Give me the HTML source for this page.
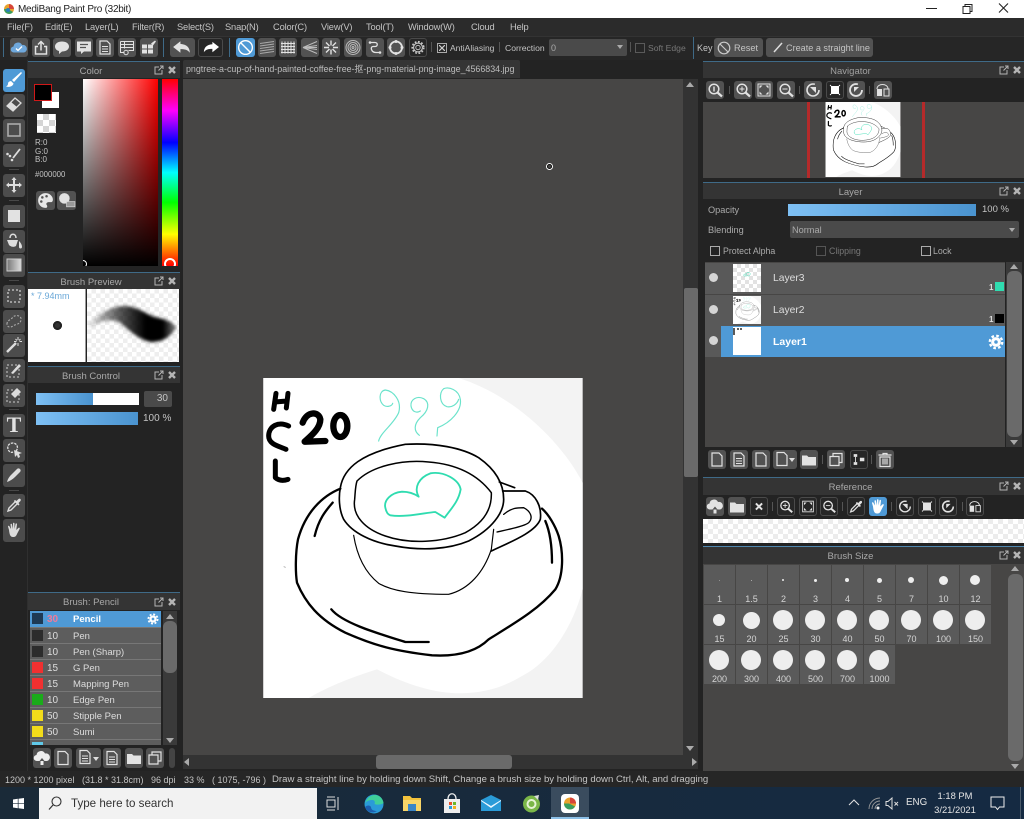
<!DOCTYPE html>
<html><head><meta charset="utf-8"><title>MediBang Paint Pro</title>
<style>
html,body{margin:0;padding:0}
body{width:1024px;height:819px;overflow:hidden;position:relative;background:#232323;font-family:"Liberation Sans","Noto Sans CJK SC",sans-serif;font-size:10px;color:#c4c4c4;filter:blur(.35px)}
div,span,svg{position:absolute;box-sizing:border-box}
.t{white-space:nowrap;line-height:12px}
.m1{font-size:9.300px;letter-spacing:-.15px;top:21px}
.h{left:0;width:100%;height:17px;background:#343434;border-top:1px solid #3f6a87;color:#a9a9a9;font-size:9.500px;line-height:19px;text-align:center;padding-right:26px}
.b{width:18px;height:18px;background:#525252;border-radius:3px;color:#e2e2e2}
.b svg{left:0;top:0;width:100%;height:100%}
.d{background:#262626;border:1px solid #4a4a4a}
.on{background:#4f9ad6;color:#fff}
.tl{left:3px;width:22px;height:23px;background:#4c4c4c;border-radius:3px;color:#ddd}
.tl.on{background:#4f9ad6;color:#fff}
.tl svg{left:2px;top:2px;width:18px;height:18px}
.sep{width:1px;background:#555}
.tsep{left:9px;width:10px;height:1px;background:#484848}
.ck{width:10px;height:10px;border:1px solid #aaa}
.cell{width:31px;height:39px;background:#5a5a5a}
.cell span{left:0;width:100%;text-align:center;font-size:9px;line-height:10px;bottom:0;color:#d5d5d5}
.cell i{position:absolute;background:#eee;border-radius:50%;display:block}
.row{left:30px;width:131px;height:15px;background:#5d5d5d}
.row .s{left:2px;top:2px;width:11px;height:11px;background:#2c2c2c}
.row .n{left:17px;top:3px;font-size:10px;color:#ddd;white-space:nowrap;line-height:12px}
.row .m{left:43px;top:3px;font-size:9.500px;color:#ddd;white-space:nowrap;line-height:12px}
.lr{left:705px;width:300px;height:31px;background:#595959}
.eye{left:4px;top:10px;width:9px;height:9px;border-radius:50%;background:#d5d5d5}
.th{left:28px;top:1px;width:28px;height:28px;background:#fff}
.chk{background:conic-gradient(#e2e2e2 25%,#fff 0 50%,#e2e2e2 0 75%,#fff 0) 0 0/8px 8px}
.fl{width:10px;height:10px;color:#b5b5b5}
.sb{background:#3a3a3a}
.th2{background:#6a6a6a;border-radius:6px}
.up{width:0;height:0;border-left:4px solid transparent;border-right:4px solid transparent;border-bottom:5px solid #aaa}
.dn{width:0;height:0;border-left:4px solid transparent;border-right:4px solid transparent;border-top:5px solid #aaa}
</style></head><body>
<svg width="0" height="0" style="left:0;top:0">
<defs>
<symbol id="fl" viewBox="0 0 10 10"><path d="M5 2H1v7h7V5M4.500 5.500L9 1M6 1h3v3" fill="none" stroke="currentColor" stroke-width="1"/></symbol>
<symbol id="cl" viewBox="0 0 10 10"><path d="M2 2l6 6M8 2l-6 6" fill="none" stroke="currentColor" stroke-width="2.400"/></symbol>
<symbol id="cloud" viewBox="0 0 18 18"><path d="M4 14a3 3 0 0 1-.5-6A4.500 4.500 0 0 1 12 6.500 3.800 3.800 0 0 1 14 14z" fill="currentColor"/><path d="M6 10l2 2 4-4" fill="none" stroke="#fff" stroke-width="1.300"/></symbol>
<symbol id="cloudup" viewBox="0 0 18 18"><path d="M4 12a3 3 0 0 1-.5-6A4.500 4.500 0 0 1 12 4.500 3.800 3.800 0 0 1 14 12h-2.500L9 9l-2.500 3z" fill="currentColor"/><path d="M7.500 12h3v4h-3z" fill="currentColor"/></symbol>
<symbol id="share" viewBox="0 0 18 18"><path d="M6 8H3.500v7.500h11V8H12M9 12V3M6 6l3-3 3 3" fill="none" stroke="currentColor" stroke-width="1.500"/></symbol>
<symbol id="chat" viewBox="0 0 18 18"><path d="M9 3c4 0 7 2 7 5s-3 5-7 5l-3 2.500V12.500C3.500 12 2 10 2 8c0-3 3-5 7-5z" fill="currentColor"/></symbol>
<symbol id="comment" viewBox="0 0 18 18"><path d="M2 3h14v10H9l-3 2.500V13H2z" fill="currentColor"/><path d="M5 6h8M5 9h6" stroke="#555" stroke-width="1.300"/></symbol>
<symbol id="doc" viewBox="0 0 18 18"><path d="M4 2.500h7l3 3v10H4z" fill="none" stroke="currentColor" stroke-width="1.200"/></symbol>
<symbol id="docl" viewBox="0 0 18 18"><path d="M4 2.500h7l3 3v10H4z" fill="none" stroke="currentColor" stroke-width="1.200"/><path d="M6 8h6M6 10.500h6M6 13h6" stroke="currentColor"/></symbol>
<symbol id="table" viewBox="0 0 18 18"><path d="M2.500 3h13v9h-5M2.500 3v11h4M2.500 6h13M2.500 9h13M6.500 3v7" fill="none" stroke="currentColor"/><circle cx="8" cy="14" r="2.200" fill="none" stroke="currentColor"/></symbol>
<symbol id="gridb" viewBox="0 0 18 18"><path d="M2 6h5v4H2zM8 6h5v4H8zM2 11h5v4H2zM8 11h5v4H8z" fill="currentColor"/><path d="M11 5l4-3 1 1-3 4z" fill="currentColor"/></symbol>
<symbol id="undo" viewBox="0 0 24 18"><path d="M10 3L3 8.500l7 5.500v-3.500c4 0 7 .5 9 3.500 0-5-3-8-9-8.500z" fill="currentColor"/></symbol>
<symbol id="redo" viewBox="0 0 24 18"><path d="M14 3l7 5.500-7 5.500v-3.500c-4 0-7 .5-9 3.500 0-5 3-8 9-8.500z" fill="currentColor"/></symbol>
<symbol id="nosnap" viewBox="0 0 18 18"><circle cx="9" cy="9" r="6.500" fill="none" stroke="currentColor" stroke-width="1.300"/><path d="M4.500 4.500l9 9" stroke="currentColor" stroke-width="1.300"/></symbol>
<symbol id="para" viewBox="0 0 18 18"><path d="M2 5l14-2M2 7.500l14-2M2 10l14-2M2 12.500l14-2M2 15l14-2" stroke="currentColor" stroke-width="1"/></symbol>
<symbol id="gridp" viewBox="0 0 18 18"><path d="M3 3v12M6 3v12M9 3v12M12 3v12M15 3v12M2 5h14M2 8h14M2 11h14M2 14h14" stroke="currentColor" stroke-width="1"/></symbol>
<symbol id="persp" viewBox="0 0 18 18"><path d="M2 9l14-6M2 9l14-2M2 9h14M2 9l14 2M2 9l14 6" stroke="currentColor" stroke-width="1"/></symbol>
<symbol id="radial" viewBox="0 0 18 18"><path d="M9 2v5M9 11v5M2 9h5M11 9h5M4 4l3.500 3.500M14 4l-3.500 3.500M4 14l3.500-3.500M14 14l-3.500-3.500" stroke="currentColor" stroke-width="1.400"/></symbol>
<symbol id="conc" viewBox="0 0 18 18"><g fill="none" stroke="currentColor"><circle cx="9" cy="9" r="7"/><circle cx="9" cy="9" r="5"/><circle cx="9" cy="9" r="3"/><circle cx="9" cy="9" r="1"/></g></symbol>
<symbol id="curve" viewBox="0 0 18 18"><path d="M4 4h5c3 0 3 4 0 4H7c-3 0-2 6 3 6h4" fill="none" stroke="currentColor" stroke-width="1.300"/><circle cx="4" cy="4" r="1.300" fill="currentColor"/><circle cx="14" cy="14" r="1.300" fill="currentColor"/></symbol>
<symbol id="circ" viewBox="0 0 18 18"><circle cx="9" cy="9" r="6" fill="none" stroke="currentColor" stroke-width="1.800"/><g fill="currentColor"><circle cx="9" cy="3" r="1.500"/><circle cx="9" cy="15" r="1.500"/><circle cx="3" cy="9" r="1.500"/><circle cx="15" cy="9" r="1.500"/></g></symbol>
<symbol id="gear" viewBox="0 0 18 18"><circle cx="9" cy="9" r="5" fill="none" stroke="currentColor" stroke-width="1.200"/><circle cx="9" cy="9" r="2.500" fill="none" stroke="currentColor"/><circle cx="9" cy="9" r="6.500" fill="none" stroke="currentColor" stroke-width="1.800" stroke-dasharray="2 1.800"/></symbol>
<symbol id="gearf" viewBox="0 0 18 18"><circle cx="9" cy="9" r="5.500" fill="currentColor"/><circle cx="9" cy="9" r="7" fill="none" stroke="currentColor" stroke-width="2.600" stroke-dasharray="3 2.500"/><circle cx="9" cy="9" r="2" fill="#4f9ad6"/></symbol>
<symbol id="mag" viewBox="0 0 18 18"><circle cx="8" cy="8" r="4.800" fill="none" stroke="currentColor" stroke-width="1.500"/><path d="M11.500 11.500L16 15.500" stroke="currentColor" stroke-width="2.200"/></symbol>
<symbol id="magp" viewBox="0 0 18 18"><circle cx="8" cy="8" r="4.800" fill="none" stroke="currentColor" stroke-width="1.500"/><path d="M11.500 11.500L16 15.500" stroke="currentColor" stroke-width="2.200"/><path d="M5.500 8h5M8 5.500v5" stroke="currentColor"/></symbol>
<symbol id="magm" viewBox="0 0 18 18"><circle cx="8" cy="8" r="4.800" fill="none" stroke="currentColor" stroke-width="1.500"/><path d="M11.500 11.500L16 15.500" stroke="currentColor" stroke-width="2.200"/><path d="M5.500 8h5" stroke="currentColor"/></symbol>
<symbol id="mag1" viewBox="0 0 18 18"><circle cx="8" cy="8" r="4.800" fill="none" stroke="currentColor" stroke-width="1.500"/><path d="M11.500 11.500L16 15.500" stroke="currentColor" stroke-width="2.200"/><path d="M8 5.500v5" stroke="currentColor" stroke-width="1.400"/></symbol>
<symbol id="fit" viewBox="0 0 18 18"><rect x="3" y="3" width="12" height="12" fill="none" stroke="currentColor"/><path d="M4.500 4.500h3l-3 3zM13.500 4.500v3l-3-3zM4.500 13.500v-3l3 3zM13.500 13.500h-3l3-3z" fill="currentColor"/></symbol>
<symbol id="fill" viewBox="0 0 18 18"><path d="M4 3l1 1.500h8L14 3l1 1-1.500 1v8L15 14l-1 1-1-1.500H5L4 15l-1-1 1.500-1V5L3 4z" fill="currentColor"/></symbol>
<symbol id="rotl" viewBox="0 0 18 18"><circle cx="9" cy="9" r="6" fill="none" stroke="currentColor" stroke-width="1.600" stroke-dasharray="30 8"/><path d="M6 6h6v6z" fill="currentColor"/></symbol>
<symbol id="rotr" viewBox="0 0 18 18"><circle cx="9" cy="9" r="6" fill="none" stroke="currentColor" stroke-width="1.800" stroke-dasharray="30 8"/><path d="M12 6H7v5z" fill="currentColor"/></symbol>
<symbol id="flip" viewBox="0 0 18 18"><path d="M3 8h5v7H3z" fill="currentColor"/><path d="M10 8h5v7h-5zM3 8c0-6 11-6 11 0" fill="none" stroke="currentColor"/></symbol>
<symbol id="folder" viewBox="0 0 18 18"><path d="M2 5h5l1.500 1.500H16V15H2z" fill="currentColor"/></symbol>
<symbol id="x" viewBox="0 0 18 18"><path d="M5.500 5.500l7 7M12.500 5.500l-7 7" stroke="currentColor" stroke-width="2.200"/></symbol>
<symbol id="copy" viewBox="0 0 18 18"><path d="M3 6h9v9H3zM6 6V3h9v9h-3" fill="none" stroke="currentColor" stroke-width="1.200"/></symbol>
<symbol id="merge" viewBox="0 0 18 18"><path d="M3 3h4v3H3zM3 12h4v3H3zM10 7h5v4h-5z" fill="currentColor"/><path d="M5 6v6" stroke="currentColor"/></symbol>
<symbol id="trash" viewBox="0 0 18 18"><path d="M2.500 4.500h13M7 4.500V3h4v1.500M4 6.500h10V16H4zM7 8v6M9 8v6M11 8v6" fill="none" stroke="currentColor" stroke-width="1.200"/></symbol>
<symbol id="hand" viewBox="0 0 18 18"><path d="M4 9L3 5.500c0-1 1.300-1 1.500 0L6 8 5.500 3.500c0-1 1.500-1 1.500 0L8 8V2.500c0-1 1.500-1 1.500 0V8l1-5c.2-1 1.500-.8 1.500.2L11.300 9l2-2c1-.8 1.800 0 1.300 1L12 13c-1 2.500-2 3-4 3-3 0-3.500-3-4-7z" fill="currentColor"/></symbol>
<symbol id="dropper" viewBox="0 0 18 18"><path d="M3 15l1-3 6.500-6.500 2 2L6 14z" fill="none" stroke="currentColor" stroke-width="1.400"/><path d="M10 4l1.500 1 2-2c1.500-1 3 .5 2 2l-2 2 1 1.500-1.200 1-4.500-4.500z" fill="currentColor"/></symbol>
</defs>
</svg>

<!-- title -->
<div style="left:0;top:0;width:1024px;height:18px;background:#fff"></div>
<svg style="left:3px;top:3px" width="12" height="12" viewBox="0 0 12 12"><circle cx="6" cy="6" r="5" fill="#e9a22c"/><path d="M6 1a5 5 0 0 1 5 5L6 6z" fill="#d8453a"/><path d="M1 6a5 5 0 0 0 5 5 5 5 0 0 0 4-2L5 6z" fill="#3a9e5e"/><circle cx="5" cy="7" r="2" fill="#2c7fb8"/></svg>
<span class="t" style="left:18px;top:4px;color:#222;font-size:10px;letter-spacing:-.27px">MediBang Paint Pro (32bit)</span>
<svg style="left:925px;top:2px" width="92" height="13" viewBox="0 0 92 13"><path d="M1 6.500h11" stroke="#222"/><path d="M38 4.500h7v7h-7zM40 4.500v-2h7v7h-2" fill="none" stroke="#222"/><path d="M74 1.500l9 9M83 1.500l-9 9" stroke="#222" stroke-width="1.100"/></svg>

<!-- menu -->
<div style="left:0;top:18px;width:1024px;height:18px;background:#2b2b2b"></div>
<span class="t m1" style="left:7px">File(F)</span>
<span class="t m1" style="left:45px">Edit(E)</span>
<span class="t m1" style="left:85px">Layer(L)</span>
<span class="t m1" style="left:132px">Filter(R)</span>
<span class="t m1" style="left:177px">Select(S)</span>
<span class="t m1" style="left:225px">Snap(N)</span>
<span class="t m1" style="left:273px">Color(C)</span>
<span class="t m1" style="left:321px">View(V)</span>
<span class="t m1" style="left:366px">Tool(T)</span>
<span class="t m1" style="left:408px">Window(W)</span>
<span class="t m1" style="left:471px">Cloud</span>
<span class="t m1" style="left:510px">Help</span>

<!-- toolbar -->
<div style="left:0;top:36px;width:1024px;height:24px;background:#262626;border-top:1px solid #333"></div>
<div class="sep" style="left:3px;top:38px;height:19px;background:#3f6a87"></div>
<div class="b" style="left:10px;top:38px;width:18px;height:19px;color:#6fa8dc"><svg><use href="#cloud"/></svg></div>
<div class="b" style="left:32px;top:38px;width:18px;height:19px"><svg><use href="#share"/></svg></div>
<div class="b" style="left:53px;top:38px;width:18px;height:19px"><svg><use href="#chat"/></svg></div>
<div class="b" style="left:75px;top:38px;width:18px;height:19px"><svg><use href="#comment"/></svg></div>
<div class="b" style="left:96px;top:38px;width:18px;height:19px"><svg><use href="#docl"/></svg></div>
<div class="b" style="left:118px;top:38px;width:18px;height:19px"><svg><use href="#table"/></svg></div>
<div class="b" style="left:140px;top:38px;width:18px;height:19px"><svg><use href="#gridb"/></svg></div>
<div class="sep" style="left:163px;top:38px;height:19px;background:#3f6a87"></div>
<div class="b" style="left:170px;top:38px;width:25px;height:19px"><svg><use href="#undo"/></svg></div>
<div class="b d" style="left:198px;top:38px;width:25px;height:19px;color:#fff"><svg><use href="#redo"/></svg></div>
<div class="sep" style="left:229px;top:38px;height:19px;background:#3f6a87"></div>
<div class="b on" style="left:236px;top:38px;width:19px;height:19px"><svg><use href="#nosnap"/></svg></div>
<div class="b" style="left:258px;top:38px;width:18px;height:19px;color:#aaa"><svg><use href="#para"/></svg></div>
<div class="b" style="left:279px;top:38px;width:18px;height:19px"><svg><use href="#gridp"/></svg></div>
<div class="b" style="left:301px;top:38px;width:18px;height:19px;color:#bbb"><svg><use href="#persp"/></svg></div>
<div class="b" style="left:322px;top:38px;width:18px;height:19px"><svg><use href="#radial"/></svg></div>
<div class="b" style="left:344px;top:38px;width:18px;height:19px;color:#bbb"><svg><use href="#conc"/></svg></div>
<div class="b" style="left:366px;top:38px;width:18px;height:19px"><svg><use href="#curve"/></svg></div>
<div class="b" style="left:387px;top:38px;width:18px;height:19px"><svg><use href="#circ"/></svg></div>
<div class="b d" style="left:409px;top:38px;width:18px;height:19px;color:#ccc"><svg><use href="#gear"/></svg></div>
<div class="sep" style="left:431px;top:42px;height:10px"></div>
<div class="ck" style="left:437px;top:43px"></div>
<svg style="left:439px;top:45px" width="6" height="6"><path d="M0 0l6 6M6 0L0 6" stroke="#ccc" stroke-width="1.200"/></svg>
<span class="t" style="left:450px;top:42px;font-size:8.500px">AntiAliasing</span>
<div class="sep" style="left:499px;top:42px;height:10px"></div>
<span class="t" style="left:505px;top:42px;font-size:8.600px">Correction</span>
<div style="left:549px;top:39px;width:78px;height:17px;background:#4a4a4a;border-radius:2px"></div>
<span class="t" style="left:551px;top:42px;font-size:9px;color:#aaa">0</span>
<div class="dn" style="left:617px;top:45px;border-left-width:3px;border-right-width:3px;border-top-width:4px"></div>
<div class="sep" style="left:630px;top:42px;height:10px"></div>
<div class="ck" style="left:635px;top:43px;border-color:#5a5a5a"></div>
<span class="t" style="left:648px;top:42px;font-size:8.600px;color:#777">Soft Edge</span>
<div class="sep" style="left:693px;top:37px;height:22px;background:#3f6a87"></div>
<span class="t" style="left:697px;top:42px;font-size:9px">Key</span>
<div class="b" style="left:714px;top:38px;width:49px;height:19px;color:#ccc"><svg style="width:16px;height:16px;left:2px;top:2px"><use href="#nosnap"/></svg></div>
<span class="t" style="left:734px;top:42px;font-size:9.200px">Reset</span>
<div class="b" style="left:766px;top:38px;width:107px;height:19px"></div>
<svg style="left:772px;top:41px" width="12" height="13"><path d="M2 11L10 2" stroke="#ddd" stroke-width="1.500"/></svg>
<span class="t" style="left:786px;top:42px;font-size:9.100px">Create a straight line</span>

<!-- tools -->
<div style="left:0;top:60px;width:28px;height:711px;background:#232323;border-right:1px solid #2f2f2f"></div>
<div class="tl on" style="top:69px"><svg viewBox="0 0 18 18"><path d="M16 1L7 9l2 2 8-9zM6 10c-2 .5-3 1-3 3 0 1-1 2-2 2.500 3 1 7 0 7.500-3z" fill="#fff"/></svg></div>
<div class="tl" style="top:94px"><svg viewBox="0 0 18 18"><path d="M2 10l8-8 6 5-8 8z" fill="none" stroke="currentColor" stroke-width="1.300"/><path d="M6 6l6 5-4 4-6-5z" fill="currentColor"/></svg></div>
<div class="tl" style="top:119px"><svg viewBox="0 0 18 18"><rect x="3" y="3" width="12" height="12" fill="none" stroke="#aaa" stroke-width="1.600"/></svg></div>
<div class="tl" style="top:144px"><svg viewBox="0 0 18 18"><path d="M8 12l7-9" stroke="currentColor" stroke-width="1.800"/><circle cx="2.500" cy="8" r="1.300" fill="currentColor"/><circle cx="5" cy="10" r="1.300" fill="currentColor"/><circle cx="7" cy="14" r="1.300" fill="currentColor"/></svg></div>
<div class="tsep" style="top:169px"></div>
<div class="tl" style="top:174px"><svg viewBox="0 0 18 18"><path d="M9 1l2.500 3H10v4h4V6.500L17 9l-3 2.500V10h-4v4h1.500L9 17l-2.500-3H8v-4H4v1.500L1 9l3-2.500V8h4V4H6.500z" fill="currentColor"/></svg></div>
<div class="tsep" style="top:200px"></div>
<div class="tl" style="top:205px"><svg viewBox="0 0 18 18"><rect x="3" y="3" width="12" height="12" fill="#e2e2e2"/></svg></div>
<div class="tl" style="top:230px"><svg viewBox="0 0 18 18"><path d="M5 6c0-5 6-5 6 0" fill="none" stroke="currentColor" stroke-width="1.500"/><path d="M2 8h11l-2 6c-3 2-6 0-7-1zM14 9c2 2 3 4 3 6s-3 2-3 0z" fill="currentColor"/></svg></div>
<div class="tl" style="top:254px"><svg viewBox="0 0 18 18"><defs><linearGradient id="g1"><stop offset="0" stop-color="#777"/><stop offset="1" stop-color="#ddd"/></linearGradient></defs><rect x="2" y="3" width="14" height="12" fill="url(#g1)" stroke="#ccc"/></svg></div>
<div class="tsep" style="top:280px"></div>
<div class="tl" style="top:285px"><svg viewBox="0 0 18 18"><rect x="3" y="3" width="12" height="12" fill="none" stroke="#ccc" stroke-width="1.300" stroke-dasharray="2 2"/></svg></div>
<div class="tl" style="top:310px"><svg viewBox="0 0 18 18"><path d="M2 12c0-4 4-4 6-7 3-3 9-1 8 3-1 5-6 4-8 6-3 2-6 1-6-2z" fill="none" stroke="#aaa" stroke-width="1.100" stroke-dasharray="2 1.500"/></svg></div>
<div class="tl" style="top:334px"><svg viewBox="0 0 18 18"><path d="M2 16l9-9" stroke="currentColor" stroke-width="2.400"/><path d="M13 1v3M13 7v3M9 5.500h2.500M14.500 5.500H17M10.500 3l1.500 1.500M15.500 3L14 4.500" stroke="currentColor"/></svg></div>
<div class="tl" style="top:359px"><svg viewBox="0 0 18 18"><rect x="2" y="4" width="12" height="12" fill="none" stroke="#ccc" stroke-dasharray="2 2"/><path d="M6 12l8-9 2 2-8 8z" fill="currentColor"/></svg></div>
<div class="tl" style="top:384px"><svg viewBox="0 0 18 18"><rect x="2" y="4" width="12" height="12" fill="none" stroke="#ccc" stroke-dasharray="2 2"/><path d="M6 8l6-6 4 4-6 6z" fill="currentColor"/></svg></div>
<div class="tsep" style="top:409px"></div>
<div class="tl" style="top:414px"></div>
<span style="left:3px;top:413px;width:22px;text-align:center;font-family:'Liberation Serif',serif;font-size:22px;line-height:24px;font-weight:bold;color:#e2e2e2">T</span>
<div class="tl" style="top:439px"><svg viewBox="0 0 18 18"><path d="M11 10c3-3 1-8-3-8S2 5 3 8c1 3 3 4 5 3" fill="none" stroke="currentColor" stroke-width="1.300" stroke-dasharray="2.500 1"/><path d="M9 9l8 3-3 1 1 3-2 1-1-3-2 2z" fill="currentColor"/></svg></div>
<div class="tl" style="top:464px"><svg viewBox="0 0 18 18"><path d="M2 16c1-4 3-6 5-8l5-5c2-2 5 1 3 3l-5 5c-2 2-5 4-8 5z" fill="currentColor"/></svg></div>
<div class="tsep" style="top:490px"></div>
<div class="tl" style="top:494px"><svg><use href="#dropper"/></svg></div>
<div class="tl" style="top:519px"><svg><use href="#hand"/></svg></div>

<!-- left panels -->
<div style="left:28px;top:61px;width:152px;height:710px;background:#232323"></div>

<!-- Color -->
<div style="left:28px;top:61px;width:152px;height:211px">
 <div class="h" style="top:0">Color</div>
 <svg class="fl" style="left:126px;top:4px"><use href="#fl"/></svg>
 <svg class="fl" style="left:139px;top:4px"><use href="#cl"/></svg>
 <div style="left:14px;top:31px;width:17px;height:16px;background:#fff"></div>
 <div style="left:6px;top:23px;width:18px;height:17px;background:#000;border:1px solid #d01818"></div>
 <div style="left:9px;top:53px;width:19px;height:19px;background:conic-gradient(#d5d5d5 25%,#fff 0 50%,#d5d5d5 0 75%,#fff 0) 0 0/12px 12px"></div>
 <span class="t" style="left:7px;top:78px;font-size:8px;line-height:8.700px">R:0<br>G:0<br>B:0</span>
 <span class="t" style="left:7px;top:109px;font-size:7.800px;line-height:10px">#000000</span>
 <div class="b" style="left:8px;top:130px;width:19px;height:19px"><svg viewBox="0 0 18 18"><path d="M9 2a7 7 0 1 0 0 14c2 0 2-2 1-3-.7-1.300.5-2.500 2-2.500h2c1.500 0 2-1 2-2.500C16 5 13 2 9 2z" fill="#e8e8e8"/><g fill="#555"><circle cx="6" cy="6" r="1.200"/><circle cx="10" cy="5" r="1.200"/><circle cx="5" cy="10" r="1.200"/></g></svg></div>
 <div class="b" style="left:29px;top:130px;width:19px;height:19px"><svg viewBox="0 0 18 18"><circle cx="7" cy="7" r="5" fill="#e2e2e2"/><rect x="9" y="10" width="8" height="5" fill="#999" stroke="#ddd" stroke-width=".6"/></svg></div>
 <div style="left:55px;top:18px;width:75px;height:187px;background:linear-gradient(to top,#000,transparent),linear-gradient(to right,#fff,#f00)"></div>
 <div style="left:134px;top:18px;width:16px;height:187px;background:linear-gradient(to bottom,#f00,#f0f 17%,#00f 34%,#0ff 50%,#0f0 66%,#ff0 83%,#f00);overflow:hidden">
  <div style="left:2px;top:179px;width:12px;height:12px;border:2px solid #fff;border-radius:50%"></div>
 </div>
 <div style="left:55px;top:18px;width:75px;height:187px;overflow:hidden"><div style="left:-4px;top:181px;width:8px;height:8px;border:1.500px solid #fff;border-radius:50%"></div></div>
</div>

<!-- Brush Preview -->
<div style="left:28px;top:272px;width:152px;height:93px;background:#232323">
 <div class="h" style="top:0">Brush Preview</div>
 <svg class="fl" style="left:126px;top:4px"><use href="#fl"/></svg>
 <svg class="fl" style="left:139px;top:4px"><use href="#cl"/></svg>
 <div style="left:0;top:17px;width:58px;height:73px;background:#fff;border-right:1px solid #999"></div>
 <span class="t" style="left:3px;top:18px;font-size:9px;color:#6aa8d8">* 7.94mm</span>
 <div style="left:25px;top:49px;width:9px;height:9px;border-radius:50%;background:#333;box-shadow:inset 0 0 0 2px #222"></div>
 <div class="chk" style="left:59px;top:17px;width:92px;height:73px;background:conic-gradient(#eee 25%,#fff 0 50%,#eee 0 75%,#fff 0) 0 0/9px 9px"></div>
 <svg style="left:59px;top:17px" width="92" height="73" viewBox="0 0 92 73"><defs><linearGradient id="g2"><stop offset="0" stop-color="#000" stop-opacity=".1"/><stop offset=".35" stop-color="#000" stop-opacity=".65"/><stop offset=".65" stop-color="#000"/><stop offset=".85" stop-color="#000"/><stop offset="1" stop-color="#000" stop-opacity=".5"/></linearGradient><filter id="bl"><feGaussianBlur stdDeviation="1.500"/></filter></defs><path d="M2 36C12 23 27 17 37 17c15 0 23 10 35 12 10 2 17 7 17 10-5 8-12 14-25 14-12-2-22-12-32-20C22 29 12 33 2 39z" fill="url(#g2)" filter="url(#bl)"/></svg>
</div>

<!-- Brush Control -->
<div style="left:28px;top:366px;width:152px;height:70px">
 <div class="h" style="top:0">Brush Control</div>
 <svg class="fl" style="left:126px;top:4px"><use href="#fl"/></svg>
 <svg class="fl" style="left:139px;top:4px"><use href="#cl"/></svg>
 <div style="left:8px;top:27px;width:103px;height:12px;background:#fff"></div>
 <div style="left:8px;top:27px;width:57px;height:12px;background:linear-gradient(to right,#7ec0f4,#4a93cf)"></div>
 <div style="left:116px;top:25px;width:28px;height:16px;background:#4a4a4a;border-radius:2px;text-align:right;padding-right:4px;line-height:16px;font-size:10px">30</div>
 <div style="left:8px;top:46px;width:102px;height:13px;background:linear-gradient(to right,#7ec0f4,#4a93cf)"></div>
 <span class="t" style="left:115px;top:47px;font-size:10px">100 %</span>
</div>

<!-- Brush list -->
<div style="left:28px;top:592px;width:152px;height:18px"><div class="h" style="top:0;height:18px">Brush: Pencil</div>
 <svg class="fl" style="left:126px;top:5px"><use href="#fl"/></svg>
 <svg class="fl" style="left:139px;top:5px"><use href="#cl"/></svg></div>
<div style="left:30px;top:611px;width:131px;height:134px;background:#777;overflow:hidden"></div>
<div class="row" style="top:611px;height:16px;background:#4f9ad6"><div class="s" style="background:#1e3a55"></div><span class="n" style="color:#f07a9a;font-weight:bold">30</span><span class="m" style="color:#fff;font-weight:bold">Pencil</span><svg style="left:117px;top:2px;width:12px;height:12px;color:#fff"><use href="#gearf"/></svg></div>
<div class="row" style="top:628px"><div class="s"></div><span class="n">10</span><span class="m">Pen</span></div>
<div class="row" style="top:644px"><div class="s"></div><span class="n">10</span><span class="m">Pen (Sharp)</span></div>
<div class="row" style="top:660px"><div class="s" style="background:#f03030"></div><span class="n">15</span><span class="m">G Pen</span></div>
<div class="row" style="top:676px"><div class="s" style="background:#f03030"></div><span class="n">15</span><span class="m">Mapping Pen</span></div>
<div class="row" style="top:692px"><div class="s" style="background:#1aab1a"></div><span class="n">10</span><span class="m">Edge Pen</span></div>
<div class="row" style="top:708px"><div class="s" style="background:#f2dc1a"></div><span class="n">50</span><span class="m">Stipple Pen</span></div>
<div class="row" style="top:724px"><div class="s" style="background:#f2dc1a"></div><span class="n">50</span><span class="m">Sumi</span></div>
<div class="row" style="top:740px;height:5px"><div class="s" style="height:3px;background:#5fc8e8"></div></div>
<div class="sb" style="left:163px;top:611px;width:14px;height:134px"></div>
<div class="up" style="left:166px;top:614px"></div>
<div class="th2" style="left:163px;top:621px;width:14px;height:52px"></div>
<div class="dn" style="left:166px;top:738px"></div>
<div class="b" style="left:33px;top:748px;height:20px;color:#eee"><svg><use href="#cloudup"/></svg></div>
<div class="b" style="left:54px;top:748px;height:20px"><svg><use href="#doc"/></svg></div>
<div class="b" style="left:76px;top:748px;width:25px;height:20px"><svg style="width:18px;height:18px"><use href="#docl"/></svg><div class="dn" style="left:17px;top:9px;border-left-width:3px;border-right-width:3px;border-top-width:4px;border-top-color:#ddd"></div></div>
<div class="b" style="left:103px;top:748px;height:20px"><svg><use href="#docl"/></svg></div>
<div class="b" style="left:125px;top:748px;height:20px"><svg><use href="#folder"/></svg></div>
<div class="b" style="left:146px;top:748px;height:20px"><svg><use href="#copy"/></svg></div>
<div class="b" style="left:169px;top:748px;width:6px;height:20px;background:#444"></div>

<!-- tab + canvas -->
<div style="left:180px;top:60px;width:523px;height:19px;background:#232323"></div>
<div style="left:183px;top:60px;width:337px;height:18px;background:#353535;border-radius:2px 2px 0 0"></div>
<span class="t" style="left:186px;top:63px;font-size:8.900px;color:#bdbdbd">pngtree-a-cup-of-hand-painted-coffee-free-抠-png-material-png-image_4566834.jpg</span>
<div style="left:183px;top:79px;width:500px;height:676px;background:#474645"></div>
<div class="sb" style="left:683px;top:79px;width:15px;height:676px;background:#333"></div>
<div class="up" style="left:686px;top:82px"></div>
<div class="th2" style="left:684px;top:288px;width:14px;height:189px;border-radius:2px"></div>
<div class="dn" style="left:686px;top:746px"></div>
<div class="sb" style="left:183px;top:755px;width:515px;height:14px;background:#333"></div>
<div style="left:184px;top:758px;width:0;height:0;border-top:4px solid transparent;border-bottom:4px solid transparent;border-right:5px solid #aaa"></div>
<div class="th2" style="left:376px;top:755px;width:136px;height:14px;border-radius:3px"></div>
<div style="left:692px;top:758px;width:0;height:0;border-top:4px solid transparent;border-bottom:4px solid transparent;border-left:5px solid #aaa"></div>
<div style="left:180px;top:60px;width:3px;height:711px;background:#232323"></div>
<div style="left:698px;top:60px;width:5px;height:711px;background:#232323"></div>

<svg style="left:262px;top:376px" width="322" height="324" viewBox="0 0 966 972">
<defs><g id="art">
<rect x="4" y="6" width="958" height="960" fill="#f3f3f3"/>
<path d="M4 6H590C760 60 900 200 962 320V640C930 760 860 860 780 900C720 935 680 945 630 950C540 960 440 930 345 880C280 900 200 930 140 966H4Z" fill="#fff"/>
<g fill="none" stroke-linecap="round" stroke-linejoin="round">
<g stroke="#000" stroke-width="15"><path d="M42 52L35 100M78 52L73 96M38 78L75 75"/><path d="M80 150C50 135 20 150 20 180C20 205 50 210 72 220"/><path d="M40 255L40 305Q55 318 78 310"/></g>
<g stroke="#000" stroke-width="19"><path d="M122 140C135 105 170 105 175 130C175 160 140 185 128 197L190 195"/><ellipse cx="235" cy="150" rx="21" ry="33"/></g>
<g stroke="#6be3cb" stroke-width="3.500"><path d="M350 195C355 170 395 145 410 110C420 75 395 45 370 42C350 45 350 75 365 88C375 95 390 90 392 82"/><path d="M472 178C455 165 455 145 475 125C500 105 505 80 485 68C465 58 445 70 447 90C450 108 465 112 475 105"/><path d="M525 180L527 155C565 140 600 105 595 70C590 40 560 32 545 38C530 50 532 85 555 92C570 95 585 85 590 70"/></g>
<g stroke="#000" stroke-width="5"><path d="M235 335C245 275 300 230 430 205C520 200 600 215 650 245C700 280 725 320 725 370C725 410 690 460 620 495C560 520 480 525 400 510C330 500 270 470 245 430C230 400 230 360 235 335Z"/><path d="M285 315C330 270 420 250 500 258C590 265 650 300 688 350C690 400 665 440 610 470C540 500 440 505 370 480C310 460 270 420 278 370C280 345 280 330 285 315Z" stroke-width="4.500"/><path d="M275 478C285 540 310 590 350 622C390 645 450 655 560 655C620 640 665 590 688 520L695 460" stroke-width="3.500"/><path d="M722 345L790 345C820 355 840 390 835 430C820 470 740 500 688 525"/><path d="M705 468C740 460 790 450 800 440C815 425 805 405 785 395C765 395 750 395 725 415" stroke-width="4"/><path d="M712 318L758 335"/></g>
<g stroke="#000" stroke-width="7"><path d="M235 338C180 360 130 410 108 490C100 530 100 590 105 620C130 680 170 730 250 770C340 810 400 825 510 838C580 842 640 830 680 790C760 740 830 700 880 640C905 600 905 530 890 480C880 450 860 415 840 398"/><path d="M212 380C190 405 170 430 158 480"/><path d="M850 435C865 470 870 510 870 560"/><path d="M208 700C240 740 340 770 430 798L500 798"/></g>
<path d="M370 395C365 375 385 350 420 347C445 347 460 355 470 362C455 335 470 305 505 292C545 285 590 310 596 340C590 375 570 395 548 425L520 408C490 410 430 425 385 418C375 415 372 405 370 395Z" stroke="#2fdcb0" stroke-width="5.500"/>
</g>
</g></defs>
<use href="#art"/>
<path d="M65 572l6 2" stroke="#888" stroke-width="2"/>
</svg>
<div style="left:549px;top:166px;width:7px;height:7px;border:1px solid #fff;border-radius:50%;outline:1px solid #111;outline-offset:-2px;margin-left:-3px;margin-top:-3px"></div>

<!-- right panels -->
<div style="left:703px;top:60px;width:321px;height:711px;background:#232323"></div>
<!-- Navigator -->
<div style="left:703px;top:61px;width:321px;height:121px">
 <div class="h" style="top:0;color:#a0a0a0">Navigator</div>
 <svg class="fl" style="left:296px;top:4px"><use href="#fl"/></svg>
 <svg class="fl" style="left:309px;top:4px"><use href="#cl"/></svg>
</div>
<div class="b" style="left:706px;top:81px"><svg><use href="#mag1"/></svg></div>
<div class="sep" style="left:729px;top:86px;height:8px"></div>
<div class="b" style="left:734px;top:81px"><svg><use href="#magp"/></svg></div>
<div class="b" style="left:755px;top:81px"><svg><use href="#fit"/></svg></div>
<div class="b" style="left:777px;top:81px"><svg><use href="#magm"/></svg></div>
<div class="sep" style="left:799px;top:86px;height:8px"></div>
<div class="b" style="left:804px;top:81px"><svg><use href="#rotl"/></svg></div>
<div class="b d" style="left:826px;top:81px;color:#fff"><svg><use href="#fill"/></svg></div>
<div class="b" style="left:847px;top:81px"><svg><use href="#rotr"/></svg></div>
<div class="sep" style="left:869px;top:86px;height:8px"></div>
<div class="b" style="left:874px;top:81px"><svg><use href="#flip"/></svg></div>
<div style="left:703px;top:102px;width:321px;height:76px;background:#474645"></div>
<div style="left:807px;top:102px;width:3px;height:76px;background:#b52a2a"></div>
<div style="left:922px;top:102px;width:3px;height:76px;background:#b52a2a"></div>
<svg style="left:825px;top:102px" width="76" height="75" viewBox="4 6 958 960"><use href="#art"/></svg>

<!-- Layer -->
<div style="left:703px;top:182px;width:321px;height:295px;background:#232323">
 <div class="h" style="top:0">Layer</div>
 <svg class="fl" style="left:296px;top:4px"><use href="#fl"/></svg>
 <svg class="fl" style="left:309px;top:4px"><use href="#cl"/></svg>
</div>
<span class="t" style="left:708px;top:204px;font-size:9.200px;color:#aaa">Opacity</span>
<div style="left:788px;top:204px;width:188px;height:12px;background:linear-gradient(to right,#7ec0f4,#4a93cf)"></div>
<span class="t" style="left:982px;top:204px;font-size:9.500px">100 %</span>
<span class="t" style="left:708px;top:224px;font-size:9.200px;color:#aaa">Blending</span>
<div style="left:790px;top:221px;width:229px;height:17px;background:#4a4a4a;border-radius:2px"></div>
<span class="t" style="left:792px;top:224px;font-size:9.200px;color:#aaa">Normal</span>
<div class="dn" style="left:1009px;top:228px;border-left-width:3px;border-right-width:3px;border-top-width:4px"></div>
<div class="ck" style="left:710px;top:246px"></div><span class="t" style="left:723px;top:245px;font-size:8.800px;color:#aaa">Protect Alpha</span>
<div class="ck" style="left:816px;top:246px;border-color:#555"></div><span class="t" style="left:829px;top:245px;font-size:8.800px;color:#777">Clipping</span>
<div class="ck" style="left:921px;top:246px"></div><span class="t" style="left:933px;top:245px;font-size:8.800px;color:#aaa">Lock</span>
<div style="left:705px;top:262px;width:300px;height:185px;background:#474645"></div>
<div class="lr" style="top:263px"><div class="eye"></div><div class="th chk"><svg width="28" height="28" viewBox="4 6 958 960"><path d="M370 395C365 375 385 350 420 347C445 347 460 355 470 362C455 335 470 305 505 292C545 285 590 310 596 340C590 375 570 395 548 425L520 408C490 410 430 425 385 418Z" fill="none" stroke="#2fdcb0" stroke-width="16"/></svg></div><span class="t" style="left:68px;top:9px;font-size:10.300px;line-height:14px;color:#ddd">Layer3</span><span class="t" style="left:284px;top:19px;font-size:8px;color:#ddd;font-weight:bold">1</span><div style="left:290px;top:19px;width:9px;height:9px;background:#2fdcb0"></div></div>
<div class="lr" style="top:295px"><div class="eye"></div><div class="th"><svg width="28" height="28" viewBox="4 6 958 960"><use href="#art"/></svg></div><span class="t" style="left:68px;top:9px;font-size:10.300px;line-height:14px;color:#ddd">Layer2</span><span class="t" style="left:284px;top:19px;font-size:8px;color:#ddd;font-weight:bold">1</span><div style="left:290px;top:19px;width:9px;height:9px;background:#000"></div></div>
<div class="lr" style="top:326px;height:31px"><div class="eye"></div><div style="left:16px;top:0;width:284px;height:31px;background:#4f9ad6"></div><div class="th"><svg width="12" height="10" style="left:0;top:0" viewBox="0 0 12 10"><path d="M1 1v7M4 2h2M7 2h2" stroke="#000" stroke-width="1.300"/></svg></div><span class="t" style="left:68px;top:10px;font-size:10.500px;line-height:13px;color:#fff;font-weight:bold">Layer1</span><svg style="left:283px;top:8px;width:16px;height:16px;color:#fff"><use href="#gearf"/></svg></div>
<div class="sb" style="left:1006px;top:262px;width:16px;height:185px"></div>
<div class="up" style="left:1010px;top:264px"></div>
<div class="th2" style="left:1007px;top:271px;width:15px;height:166px"></div>
<div class="dn" style="left:1010px;top:440px"></div>
<div class="b" style="left:708px;top:450px;height:19px"><svg><use href="#doc"/></svg></div>
<div class="b" style="left:730px;top:450px;height:19px"><svg><use href="#docl"/></svg></div>
<div class="b" style="left:752px;top:450px;height:19px"><svg><use href="#doc"/></svg></div>
<div class="b" style="left:773px;top:450px;width:24px;height:19px"><svg style="width:18px;height:18px"><use href="#doc"/></svg><div class="dn" style="left:16px;top:8px;border-left-width:3px;border-right-width:3px;border-top-width:4px;border-top-color:#ddd"></div></div>
<div class="b" style="left:800px;top:450px;height:19px"><svg><use href="#folder"/></svg></div>
<div class="sep" style="left:822px;top:455px;height:9px"></div>
<div class="b" style="left:827px;top:450px;height:19px"><svg><use href="#copy"/></svg></div>
<div class="b d" style="left:850px;top:450px;height:19px"><svg><use href="#merge"/></svg></div>
<div class="sep" style="left:871px;top:455px;height:9px"></div>
<div class="b" style="left:876px;top:450px;height:19px"><svg><use href="#trash"/></svg></div>

<!-- Reference -->
<div style="left:703px;top:477px;width:321px;height:69px;background:#232323">
 <div class="h" style="top:0;height:18px">Reference</div>
 <svg class="fl" style="left:296px;top:4px"><use href="#fl"/></svg>
 <svg class="fl" style="left:309px;top:4px"><use href="#cl"/></svg>
</div>
<div class="b" style="left:706px;top:497px;height:19px"><svg><use href="#cloudup"/></svg></div>
<div class="b" style="left:728px;top:497px;height:19px"><svg><use href="#folder"/></svg></div>
<div class="b d" style="left:750px;top:497px;height:19px"><svg><use href="#x"/></svg></div>
<div class="sep" style="left:772px;top:502px;height:9px"></div>
<div class="b d" style="left:777px;top:497px;height:19px"><svg><use href="#magp"/></svg></div>
<div class="b d" style="left:799px;top:497px;height:19px"><svg><use href="#fit"/></svg></div>
<div class="b d" style="left:820px;top:497px;height:19px"><svg><use href="#magm"/></svg></div>
<div class="sep" style="left:842px;top:502px;height:9px"></div>
<div class="b d" style="left:847px;top:497px;height:19px"><svg><use href="#dropper"/></svg></div>
<div class="b on" style="left:869px;top:497px;height:19px"><svg><use href="#hand"/></svg></div>
<div class="sep" style="left:891px;top:502px;height:9px"></div>
<div class="b d" style="left:896px;top:497px;height:19px"><svg><use href="#rotl"/></svg></div>
<div class="b d" style="left:918px;top:497px;height:19px"><svg><use href="#fill"/></svg></div>
<div class="b d" style="left:939px;top:497px;height:19px"><svg><use href="#rotr"/></svg></div>
<div class="sep" style="left:962px;top:502px;height:9px"></div>
<div class="b d" style="left:966px;top:497px;height:19px"><svg><use href="#flip"/></svg></div>
<div style="left:703px;top:519px;width:321px;height:24px;background:conic-gradient(#ececec 25%,#fff 0 50%,#ececec 0 75%,#fff 0) 0 0/10px 10px"></div>

<!-- Brush Size -->
<div style="left:703px;top:546px;width:321px;height:225px;background:#474645">
 <div class="h" style="top:0;height:18px;border-top-color:#4f86ad">Brush Size</div>
 <svg class="fl" style="left:296px;top:4px"><use href="#fl"/></svg>
 <svg class="fl" style="left:309px;top:4px"><use href="#cl"/></svg>
</div>
<div class="cell" style="left:704px;top:565px"><i style="left:15px;top:15px;width:1px;height:1px;opacity:.5"></i><span>1</span></div>
<div class="cell" style="left:736px;top:565px"><i style="left:15px;top:15px;width:1px;height:1px;opacity:.7"></i><span>1.5</span></div>
<div class="cell" style="left:768px;top:565px"><i style="left:14px;top:14px;width:2px;height:2px"></i><span>2</span></div>
<div class="cell" style="left:800px;top:565px"><i style="left:14px;top:14px;width:3px;height:3px"></i><span>3</span></div>
<div class="cell" style="left:832px;top:565px"><i style="left:13px;top:13px;width:4px;height:4px"></i><span>4</span></div>
<div class="cell" style="left:864px;top:565px"><i style="left:13px;top:13px;width:5px;height:5px"></i><span>5</span></div>
<div class="cell" style="left:896px;top:565px"><i style="left:12px;top:12px;width:6px;height:6px"></i><span>7</span></div>
<div class="cell" style="left:928px;top:565px"><i style="left:11px;top:11px;width:9px;height:9px"></i><span>10</span></div>
<div class="cell" style="left:960px;top:565px"><i style="left:10px;top:10px;width:10px;height:10px"></i><span>12</span></div>
<div class="cell" style="left:704px;top:605px"><i style="left:9px;top:9px;width:12px;height:12px"></i><span>15</span></div>
<div class="cell" style="left:736px;top:605px"><i style="left:7px;top:7px;width:17px;height:17px"></i><span>20</span></div>
<div class="cell" style="left:768px;top:605px"><i style="left:5px;top:5px;width:20px;height:20px"></i><span>25</span></div>
<div class="cell" style="left:800px;top:605px"><i style="left:5px;top:5px;width:20px;height:20px"></i><span>30</span></div>
<div class="cell" style="left:832px;top:605px"><i style="left:5px;top:5px;width:20px;height:20px"></i><span>40</span></div>
<div class="cell" style="left:864px;top:605px"><i style="left:5px;top:5px;width:20px;height:20px"></i><span>50</span></div>
<div class="cell" style="left:896px;top:605px"><i style="left:5px;top:5px;width:20px;height:20px"></i><span>70</span></div>
<div class="cell" style="left:928px;top:605px"><i style="left:5px;top:5px;width:20px;height:20px"></i><span>100</span></div>
<div class="cell" style="left:960px;top:605px"><i style="left:5px;top:5px;width:20px;height:20px"></i><span>150</span></div>
<div class="cell" style="left:704px;top:645px"><i style="left:5px;top:5px;width:20px;height:20px"></i><span>200</span></div>
<div class="cell" style="left:736px;top:645px"><i style="left:5px;top:5px;width:20px;height:20px"></i><span>300</span></div>
<div class="cell" style="left:768px;top:645px"><i style="left:5px;top:5px;width:20px;height:20px"></i><span>400</span></div>
<div class="cell" style="left:800px;top:645px"><i style="left:5px;top:5px;width:20px;height:20px"></i><span>500</span></div>
<div class="cell" style="left:832px;top:645px"><i style="left:5px;top:5px;width:20px;height:20px"></i><span>700</span></div>
<div class="cell" style="left:864px;top:645px"><i style="left:5px;top:5px;width:20px;height:20px"></i><span>1000</span></div>
<div class="up" style="left:1011px;top:566px"></div>
<div class="th2" style="left:1008px;top:574px;width:15px;height:187px"></div>
<div class="dn" style="left:1011px;top:764px"></div>

<!-- status -->
<div style="left:0;top:771px;width:1024px;height:16px;background:#262626"></div>
<span class="t" style="left:5px;top:774px;font-size:9px">1200 * 1200 pixel</span>
<span class="t" style="left:82px;top:774px;font-size:9px">(31.8 * 31.8cm)</span>
<span class="t" style="left:151px;top:774px;font-size:9px">96 dpi</span>
<span class="t" style="left:184px;top:774px;font-size:9px">33 %</span>
<span class="t" style="left:212px;top:774px;font-size:9px">( 1075, -796 )</span>
<span class="t" style="left:272px;top:774px;font-size:9.600px">Draw a straight line by holding down Shift, Change a brush size by holding down Ctrl, Alt, and dragging</span>

<!-- taskbar -->
<div style="left:0;top:787px;width:1024px;height:32px;background:linear-gradient(to right,#1a2a38,#152a42)"></div>
<svg style="left:13px;top:798px" width="11" height="11"><path d="M0 1.500L4.800.8v4.400H0zM5.500.7L11 0v5.200H5.500zM0 5.900h4.800v4.300L0 9.500zM5.500 5.900H11V11l-5.500-.8z" fill="#fff"/></svg>
<div style="left:39px;top:788px;width:278px;height:31px;background:#f2f2f2"></div>
<svg style="left:47px;top:795px" width="16" height="16"><circle cx="9.500" cy="6.500" r="4.500" fill="none" stroke="#333" stroke-width="1.100"/><path d="M6 10l-4 4.500" stroke="#333" stroke-width="1.200"/></svg>
<span class="t" style="left:71px;top:797px;font-size:11.600px;color:#333;line-height:14px">Type here to search</span>
<svg style="left:326px;top:796px" width="15" height="15"><path d="M1 1h8M1 14h8M1 4h8v7H1zM12 1v13" fill="none" stroke="#ddd" stroke-width="1"/></svg>
<svg style="left:364px;top:794px" width="20" height="20" viewBox="0 0 20 20"><circle cx="10" cy="10" r="9.500" fill="#2a9bd8"/><path d="M1 10C2 4 7 .5 12 1c4 .5 7 4 7.500 8-2 2-7 2-9 1 1-2 0-4-2-4C5 6 2 7 1 10z" fill="#3fcf9a"/><path d="M7 13c0 3 3 4 6 4-5 3-10 1-12-4 2-2 5-2 6 0z" fill="#1c5fb0"/></svg>
<svg style="left:403px;top:795px" width="18" height="17"><path d="M0 1h7l2 2h9v13H0z" fill="#f2c23c"/><path d="M0 5h18v11H0z" fill="#f8d568"/><rect x="5" y="9" width="8" height="7" fill="#3a86c8"/></svg>
<svg style="left:443px;top:793px" width="18" height="20"><path d="M1 6h16v14H1z" fill="#eee"/><path d="M5 6c0-7 8-7 8 0" fill="none" stroke="#eee" stroke-width="1.300"/><rect x="6" y="9" width="3" height="3" fill="#e8502a"/><rect x="10" y="9" width="3" height="3" fill="#6bb82a"/><rect x="6" y="13" width="3" height="3" fill="#2a9bd8"/><rect x="10" y="13" width="3" height="3" fill="#f2b01e"/></svg>
<svg style="left:481px;top:795px" width="20" height="16"><path d="M0 5L10 0l10 5v11H0z" fill="#2a9bd8"/><path d="M0 5l10 6 10-6v1L10 13 0 6z" fill="#eaf6ff"/></svg>
<svg style="left:522px;top:794px" width="19" height="19"><circle cx="9.500" cy="10" r="8.500" fill="#7ab648"/><circle cx="9.500" cy="10" r="4" fill="none" stroke="#e6f3d6" stroke-width="2"/><path d="M12 2l5-1-1 5z" fill="#ddd"/></svg>
<div style="left:551px;top:787px;width:38px;height:32px;background:#3a4c5e"></div>
<div style="left:551px;top:817px;width:38px;height:2px;background:#8cc0e8"></div>
<svg style="left:561px;top:794px" width="18" height="19" viewBox="0 0 18 19"><rect x="0" y="0" width="18" height="19" rx="4" fill="#fff"/><circle cx="9" cy="9.500" r="6" fill="#e9a22c"/><path d="M9 3.500a6 6 0 0 1 6 6H9z" fill="#d8453a"/><path d="M3 9.500a6 6 0 0 0 6 6 6 6 0 0 0 5-3L8 9.500z" fill="#3a9e5e"/></svg>
<svg style="left:848px;top:798px" width="12" height="10"><path d="M1 7l5-5 5 5" fill="none" stroke="#ddd" stroke-width="1.100"/></svg>
<svg style="left:868px;top:797px" width="13" height="13"><path d="M1 12A11 11 0 0 1 12 1M4 12a8 8 0 0 1 8-8M7 12a5 5 0 0 1 5-5" fill="none" stroke="#999" stroke-width=".9"/><circle cx="10" cy="11" r="1.500" fill="#eee"/></svg>
<svg style="left:885px;top:797px" width="14" height="13"><path d="M1 4.500h2L7 1v11L3 8.500H1z" fill="none" stroke="#ddd"/><path d="M9.500 5l3.500 3.500M13 5L9.500 8.500" stroke="#ddd"/></svg>
<span class="t" style="left:906px;top:797px;font-size:9.800px;color:#e4e4e4">ENG</span>
<span class="t" style="left:935px;top:790px;width:40px;text-align:center;font-size:9.400px;color:#e4e4e4">1:18 PM</span>
<span class="t" style="left:933px;top:804px;width:44px;text-align:center;font-size:9.400px;color:#e4e4e4">3/21/2021</span>
<svg style="left:990px;top:796px" width="15" height="15"><path d="M1 1h13v10H9.500L7.500 13.500 5.500 11H1z" fill="none" stroke="#eee"/></svg>
<div style="left:1020px;top:787px;width:1px;height:32px;background:#4a5a6a"></div>
</body></html>
